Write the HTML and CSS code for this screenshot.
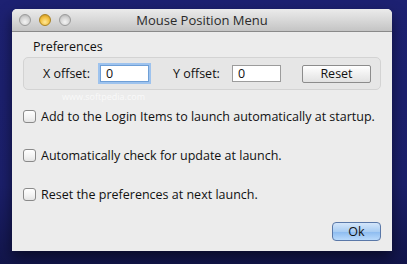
FILE: index.html
```html
<!DOCTYPE html>
<html>
<head>
<meta charset="utf-8">
<link rel="stylesheet" href="styles.css">
</head>
<body>
<div class="desk">
  <div class="window">
    <div class="titlebar">
      <div class="lights">
        <span class="light grey"></span>
        <span class="light amber"></span>
        <span class="light grey"></span>
      </div>
      <div class="title">Mouse Position Menu</div>
    </div>
    <div class="content">
      <div class="group-label">Preferences</div>
      <div class="group">
        <span class="lbl xlbl">X offset:</span>
        <span class="field focus">0</span>
        <span class="lbl ylbl">Y offset:</span>
        <span class="field">0</span>
        <span class="btn">Reset</span>
        <span class="wm2">www.softpedia.com</span>
      </div>
      <div class="checks">
        <div class="check"><span class="box"></span>Add to the Login Items to launch automatically at startup.</div>
        <div class="check"><span class="box"></span>Automatically check for update at launch.</div>
        <div class="check"><span class="box"></span>Reset the preferences at next launch.</div>
      </div>
      <div class="footer"><span class="ok">Ok</span></div>
    </div>
  </div>
</div>
</body>
</html>
```
FILE: styles.css
```css
html, body {
  margin: 0;
  padding: 0;
}
body {
  width: 407px;
  height: 264px;
  overflow: hidden;
  font-family: "Open Sans", "DejaVu Sans", sans-serif;
  font-size: 13px;
  color: #111;
}
.desk {
  width: 407px;
  height: 264px;
  background: linear-gradient(180deg, #1d2172 0%, #1b1f6a 70%, #12154a 100%);
  padding: 9px 0 0 12px;
  box-sizing: border-box;
}
.window {
  width: 380px;
  height: 242px;
  border-radius: 5px 5px 0 0;
  overflow: hidden;
  display: flex;
  flex-direction: column;
  background: #ececec;
  box-shadow: 0 6px 14px rgba(0,0,0,0.5);
}
.titlebar {
  height: 22px;
  background: linear-gradient(180deg, #ebebeb 0%, #d8d8d8 50%, #c4c4c4 100%);
  border-bottom: 1px solid #8a8a8a;
  position: relative;
  display: flex;
  align-items: center;
}
.lights {
  display: flex;
  gap: 8px;
  padding-left: 7px;
}
.light {
  width: 12px;
  height: 12px;
  border-radius: 50%;
  box-sizing: border-box;
}
.grey {
  background: radial-gradient(circle at 50% 70%, #f4f4f4 0%, #d2d2d2 55%, #a8a8a8 100%);
  border: 1px solid #9a9a9a;
}
.amber {
  background: radial-gradient(circle at 50% 70%, #ffe99a 0%, #f1be3e 55%, #c08a1e 100%);
  border: 1px solid #a9801f;
}
.title {
  position: absolute;
  left: 0;
  right: 0;
  top: 0;
  line-height: 22px;
  text-align: center;
  color: #2a2a2a;
  font-size: 13px;
}
.content {
  flex: 1;
  padding: 7px 11px 10px 11px;
  display: flex;
  flex-direction: column;
}
.group-label {
  padding-left: 10px;
  line-height: 16px;
  font-size: 12.5px;
}
.group {
  position: relative;
  margin-top: 2px;
  height: 33px;
  box-sizing: border-box;
  border: 1px solid #d3d3d3;
  border-radius: 5px;
  background: #e6e6e6;
  display: flex;
  align-items: center;
  padding-left: 19px;
}
.lbl {
  font-size: 12.5px;
}
.xlbl {
  width: 57px;
}
.ylbl {
  margin-left: 24px;
  width: 59px;
}
.field {
  width: 49px;
  height: 17px;
  box-sizing: border-box;
  background: #fff;
  border: 1px solid #9c9c9c;
  line-height: 15px;
  padding-left: 5px;
  font-size: 12.5px;
}
.field.focus {
  border-color: #6f9fd6;
  box-shadow: 0 0 0 2px #9ec3ee;
}
.btn {
  margin-left: 21px;
  width: 69px;
  height: 18px;
  box-sizing: border-box;
  border: 1px solid #8c8c8c;
  border-radius: 2px;
  background: linear-gradient(180deg, #ffffff 0%, #f0f0f0 50%, #e2e2e2 100%);
  text-align: center;
  line-height: 16px;
  font-size: 12.5px;
}
.wm2 {
  position: absolute;
  left: 38px;
  top: 33px;
  font-size: 9px;
  color: rgba(255,255,255,0.7);
  line-height: 12px;
}
.checks {
  display: flex;
  flex-direction: column;
  gap: 23px;
  margin-top: 18px;
}
.check {
  display: flex;
  align-items: center;
  height: 16px;
  font-size: 12.5px;
}
.box {
  width: 13px;
  height: 13px;
  box-sizing: border-box;
  border: 1px solid #8a8a8a;
  border-radius: 3px;
  background: linear-gradient(180deg, #ffffff 0%, #f2f2f2 60%, #e4e4e4 100%);
  margin-right: 5px;
}
.footer {
  margin-top: auto;
  display: flex;
  justify-content: flex-end;
}
.ok {
  width: 49px;
  height: 19px;
  box-sizing: border-box;
  border: 1px solid #5a78a8;
  border-radius: 4px;
  background: linear-gradient(180deg, #d4e6fa 0%, #a9cdf3 50%, #8fbdf0 55%, #b9dafc 100%);
  text-align: center;
  line-height: 17px;
  font-size: 12.5px;
}
```
